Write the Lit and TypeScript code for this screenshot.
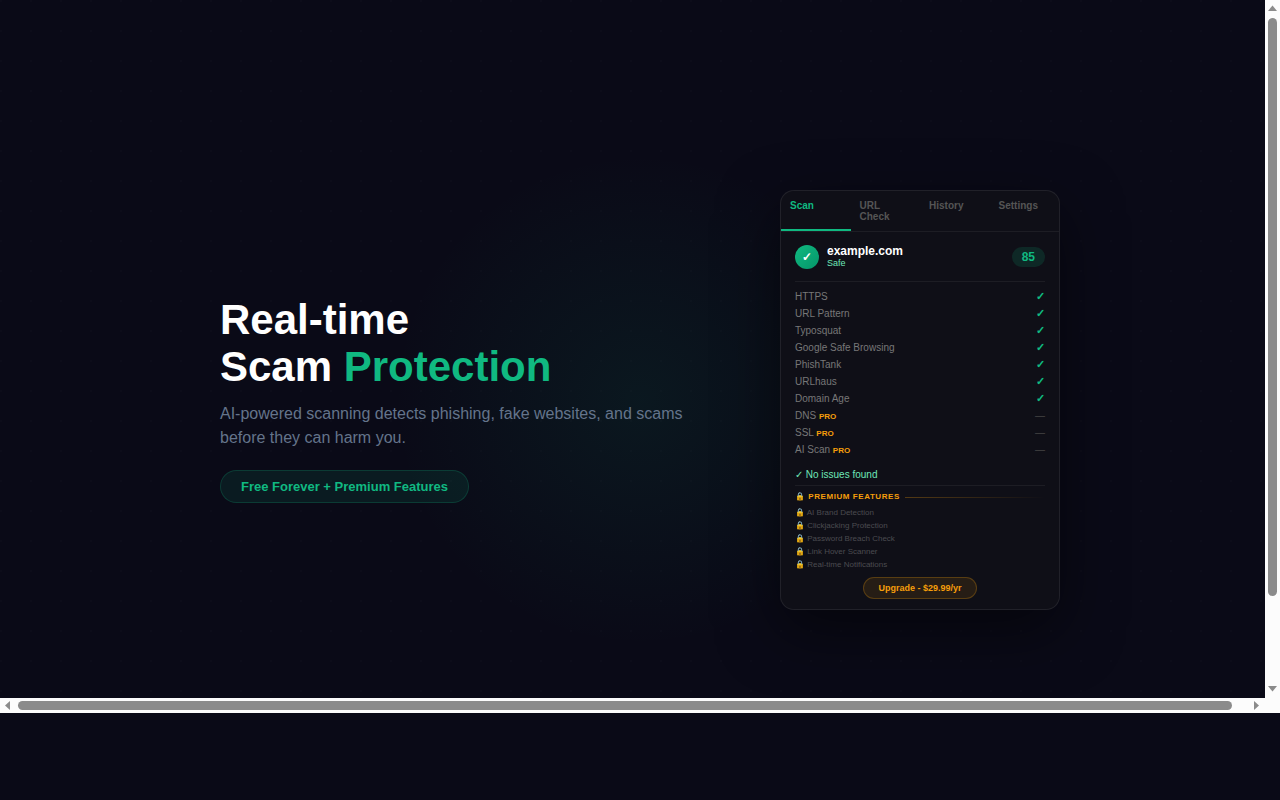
import { LitElement, html, css } from "lit";
import { customElement, state } from "lit/decorators.js";
import { classMap } from "lit/directives/class-map.js";

interface Check {
  name: string;
  pro?: boolean;
}

const TABS = ["Scan", "URL Check", "History", "Settings"];

const CHECKS: Check[] = [
  { name: "HTTPS" },
  { name: "URL Pattern" },
  { name: "Typosquat" },
  { name: "Google Safe Browsing" },
  { name: "PhishTank" },
  { name: "URLhaus" },
  { name: "Domain Age" },
  { name: "DNS", pro: true },
  { name: "SSL", pro: true },
  { name: "AI Scan", pro: true },
];

const PREMIUM = [
  "AI Brand Detection",
  "Clickjacking Protection",
  "Password Breach Check",
  "Link Hover Scanner",
  "Real-time Notifications",
];

@customElement("scan-popup")
export class ScanPopup extends LitElement {
  @state() private active = 0;

  static styles = css`
    :host {
      display: block;
      box-sizing: border-box;
      width: 280px;
      flex: none;
      overflow: hidden;
      color: #fff;
      background: #0f0f17;
      border: 1px solid rgba(255, 255, 255, 0.08);
      border-radius: 14px;
      box-shadow: 0 20px 60px rgba(0, 0, 0, 0.5);
    }
    * {
      box-sizing: border-box;
    }
    button {
      font-family: inherit;
      cursor: pointer;
    }
    ul {
      list-style: none;
      margin: 0;
      padding: 0;
    }
    .tabs {
      display: grid;
      grid-template-columns: repeat(4, 1fr);
      border-bottom: 1px solid rgba(255, 255, 255, 0.06);
    }
    .tab {
      display: flex;
      align-items: flex-start;
      padding: 9px 9px 7px;
      border: 0;
      border-bottom: 2px solid transparent;
      background: none;
      color: #555;
      font-size: 10px;
      font-weight: 600;
      line-height: 11px;
      text-align: left;
    }
    .tab.on {
      color: #10b981;
      border-bottom-color: #10b981;
    }
    .body {
      padding: 13px 14px 10px;
    }
    .site {
      display: flex;
      align-items: center;
      gap: 8px;
      padding-bottom: 12px;
      border-bottom: 1px solid rgba(255, 255, 255, 0.06);
    }
    .status {
      display: grid;
      place-items: center;
      width: 24px;
      height: 24px;
      border-radius: 50%;
      background: linear-gradient(135deg, #10b981, #059669);
      font-size: 12px;
      font-weight: 700;
    }
    .names {
      flex: 1;
    }
    .domain {
      font-size: 12px;
      font-weight: 600;
      line-height: 13px;
    }
    .verdict {
      color: #6ee7b7;
      font-size: 9px;
      line-height: 11px;
    }
    .score {
      padding: 3px 10px;
      border-radius: 10px;
      background: rgba(16, 185, 129, 0.15);
      color: #10b981;
      font-size: 12px;
      font-weight: 700;
      line-height: 14px;
    }
    .checks {
      padding-top: 6px;
    }
    .check {
      display: flex;
      justify-content: space-between;
      align-items: center;
      height: 17px;
      color: #777;
      font-size: 10px;
    }
    .pro {
      color: #f59e0b;
      font-size: 8px;
      font-weight: 700;
    }
    .pass {
      color: #10b981;
      font-size: 11px;
      font-weight: 600;
    }
    .none {
      color: #444;
    }
    .result {
      margin: 11px 0 0;
      padding-bottom: 4px;
      border-bottom: 1px solid rgba(255, 255, 255, 0.06);
      color: #6ee7b7;
      font-size: 10px;
      line-height: 12px;
    }
    .premium {
      display: flex;
      align-items: center;
      gap: 5px;
      margin: 5px 0 3px;
      color: #f59e0b;
      font-size: 8px;
      font-weight: 700;
      letter-spacing: 0.07em;
      line-height: 12px;
    }
    .premium::after {
      content: "";
      flex: 1;
      height: 1px;
      background: linear-gradient(90deg, rgba(245, 158, 11, 0.3), transparent);
    }
    .locked li {
      color: #4b4b50;
      font-size: 8px;
      line-height: 13px;
    }
    .upgrade {
      display: block;
      margin: 6px auto 0;
      padding: 5px 14px;
      border: 1px solid rgba(245, 158, 11, 0.25);
      border-radius: 11px;
      background: rgba(245, 158, 11, 0.1);
      color: #f59e0b;
      font-size: 9px;
      font-weight: 600;
      line-height: 10px;
    }
  `;

  render() {
    return html`
      <nav class="tabs">
        ${TABS.map(
          (t, i) => html`<button
            type="button"
            class=${classMap({ tab: true, on: i === this.active })}
            @click=${() => (this.active = i)}
          >${t}</button>`
        )}
      </nav>
      <div class="body">
        <div class="site">
          <span class="status">✓</span>
          <div class="names">
            <div class="domain">example.com</div>
            <div class="verdict">Safe</div>
          </div>
          <span class="score">85</span>
        </div>
        <ul class="checks">
          ${CHECKS.map(
            (c) => html`<li class="check">
              <span>${c.name} ${c.pro ? html`<span class="pro">PRO</span>` : ""}</span>
              <span class=${c.pro ? "none" : "pass"}>${c.pro ? "—" : "✓"}</span>
            </li>`
          )}
        </ul>
        <p class="result">✓ No issues found</p>
        <h2 class="premium">🔒 PREMIUM FEATURES</h2>
        <ul class="locked">
          ${PREMIUM.map((p) => html`<li>🔒 ${p}</li>`)}
        </ul>
        <button type="button" class="upgrade">Upgrade - $29.99/yr</button>
      </div>
    `;
  }
}

@customElement("app-root")
export class AppRoot extends LitElement {
  static styles = css`
    :host {
      display: block;
      height: 100vh;
      overflow: hidden;
      background: #0a0a17;
      color: #fff;
      font-family: "Liberation Sans", Arial, sans-serif;
    }
    * {
      box-sizing: border-box;
    }
    .frame {
      display: grid;
      grid-template: minmax(0, 1fr) 15px / minmax(0, 1fr) 15px;
      height: calc(100vh - 87px);
      background: #fcfcfc;
    }
    .viewport {
      overflow: auto;
      scrollbar-width: none;
    }
    .bar {
      display: flex;
      align-items: center;
      justify-content: space-between;
      gap: 3px;
    }
    .bar.vertical {
      flex-direction: column;
      padding: 5px 0 6px;
    }
    .bar.horizontal {
      padding: 0 6px 0 5px;
    }
    .bar svg {
      display: block;
      flex: none;
      fill: #8b8b8b;
    }
    .track {
      display: flex;
      flex: 1;
    }
    .vertical .track {
      flex-direction: column;
      padding: 4px 0;
    }
    .horizontal .track {
      padding: 0 5px;
    }
    .thumb {
      border-radius: 5px;
      background: #8b8b8b;
    }
    .vertical .thumb {
      width: 9px;
      height: 87.4%;
    }
    .horizontal .thumb {
      width: 98.9%;
      height: 9px;
    }
    .stage {
      display: flex;
      align-items: center;
      justify-content: center;
      gap: 60px;
      width: 100vw;
      height: 100vh;
      background:
        radial-gradient(circle at center, rgba(16, 185, 129, 0.08), transparent 247px),
        radial-gradient(circle at 1px 1px, rgba(255, 255, 255, 0.01) 1px, transparent 1px) 0 0 / 30px 30px,
        #0a0a17;
    }
    .copy {
      width: 500px;
    }
    h1 {
      margin: 0 0 12px;
      font-size: 42px;
      font-weight: 700;
      line-height: 47px;
    }
    .accent {
      color: #10b981;
    }
    .lead {
      margin: 0 0 20px;
      color: #64748b;
      font-size: 16px;
      line-height: 24px;
    }
    .badge {
      display: inline-block;
      margin-bottom: 2px;
      padding: 8px 20px;
      border: 1px solid rgba(16, 185, 129, 0.2);
      border-radius: 17px;
      background: rgba(16, 185, 129, 0.1);
      color: #10b981;
      font-size: 13px;
      font-weight: 600;
      line-height: 15px;
      vertical-align: top;
    }
  `;

  render() {
    return html`
      <div class="frame">
        <div class="viewport">
          <main class="stage">
            <section class="copy">
              <h1>Real-time<br />Scam <span class="accent">Protection</span></h1>
              <p class="lead">
                AI-powered scanning detects phishing, fake websites, and scams before they can harm you.
              </p>
              <span class="badge">Free Forever + Premium Features</span>
            </section>
            <scan-popup></scan-popup>
          </main>
        </div>
        <div class="bar vertical" aria-hidden="true">
          <svg width="9" height="6" viewBox="0 0 9 6"><path d="M4.5 0.5 9 6H0z" /></svg>
          <div class="track"><div class="thumb"></div></div>
          <svg width="9" height="6" viewBox="0 0 9 6"><path d="M4.5 5.5 9 0H0z" /></svg>
        </div>
        <div class="bar horizontal" aria-hidden="true">
          <svg width="5" height="9" viewBox="0 0 5 9"><path d="M0 4.5 5 0v9z" /></svg>
          <div class="track"><div class="thumb"></div></div>
          <svg width="5" height="9" viewBox="0 0 5 9"><path d="M5 4.5 0 0v9z" /></svg>
        </div>
      </div>
    `;
  }
}
